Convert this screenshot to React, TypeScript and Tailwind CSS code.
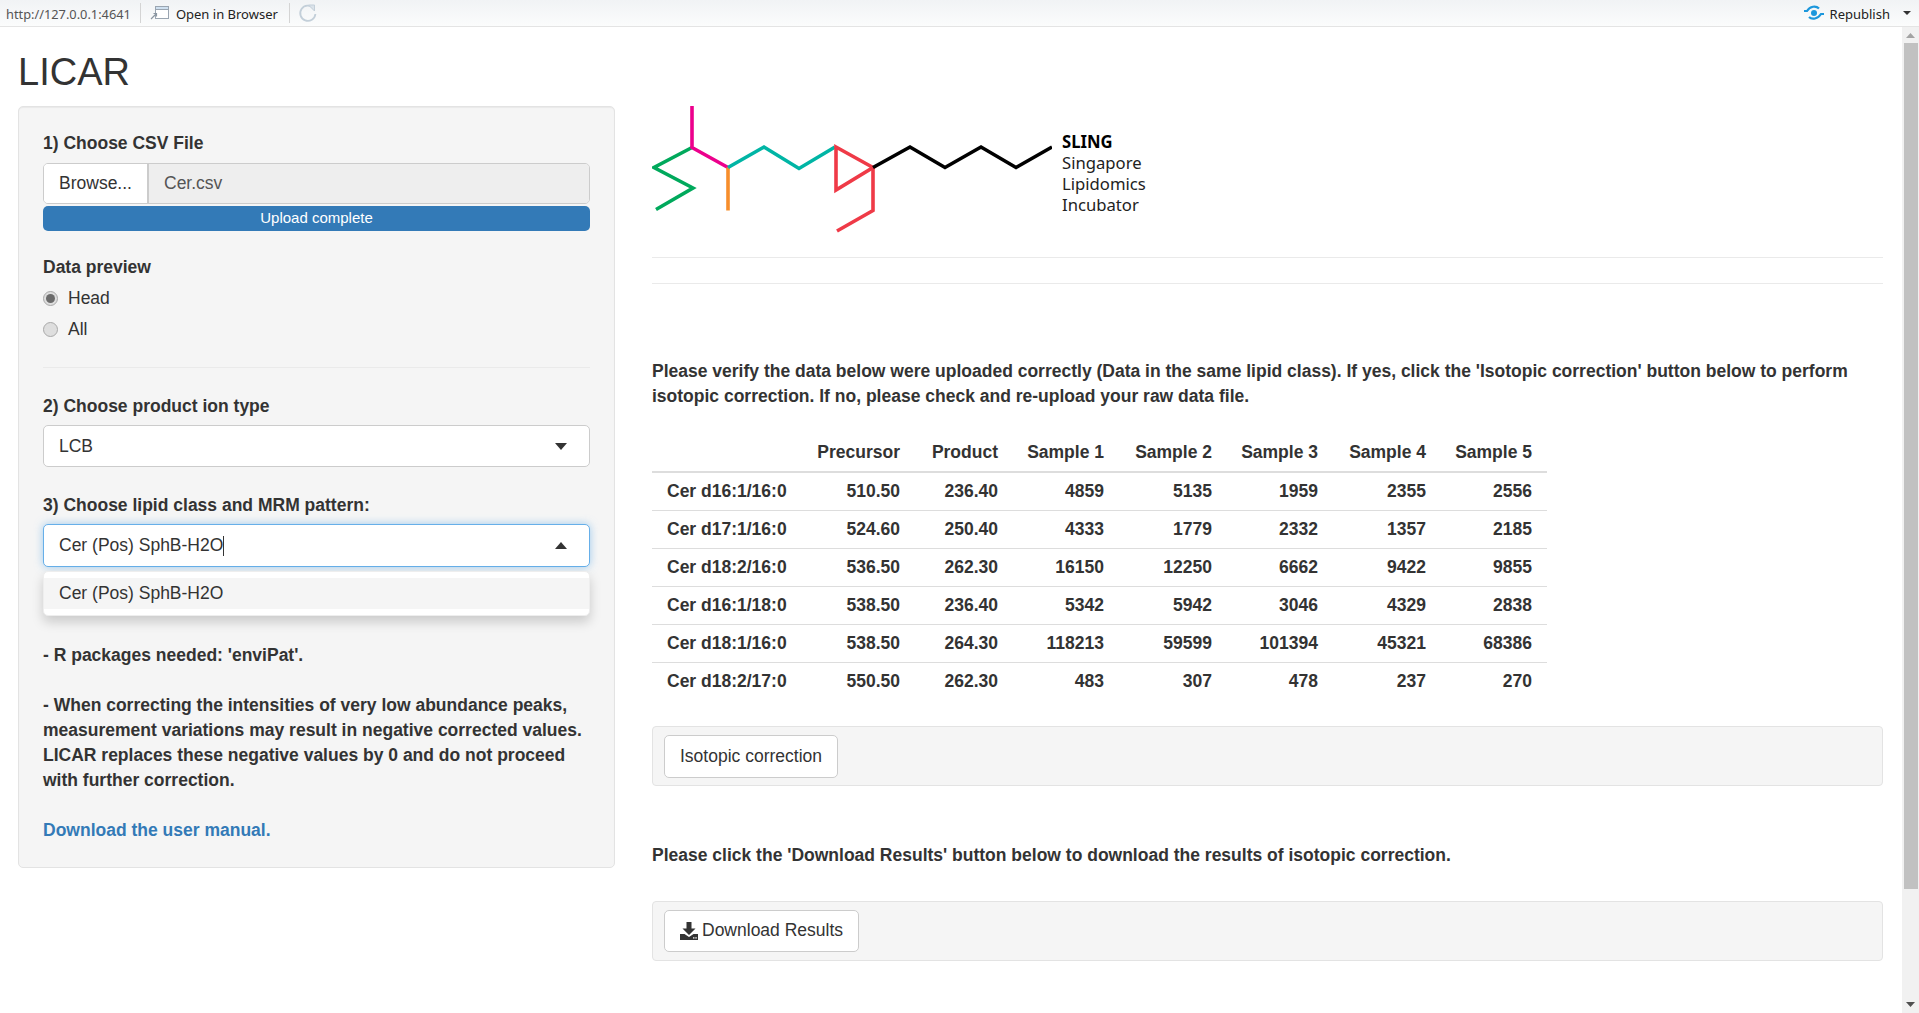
import React from "react";

const COLUMNS = [
  { name: "Precursor", width: "w-[113px]" },
  { name: "Product", width: "w-[98px]" },
  { name: "Sample 1", width: "w-[106px]" },
  { name: "Sample 2", width: "w-[108px]" },
  { name: "Sample 3", width: "w-[106px]" },
  { name: "Sample 4", width: "w-[108px]" },
  { name: "Sample 5", width: "w-[106px]" },
];

const ROWS: string[][] = [
  ["Cer d16:1/16:0", "510.50", "236.40", "4859", "5135", "1959", "2355", "2556"],
  ["Cer d17:1/16:0", "524.60", "250.40", "4333", "1779", "2332", "1357", "2185"],
  ["Cer d18:2/16:0", "536.50", "262.30", "16150", "12250", "6662", "9422", "9855"],
  ["Cer d16:1/18:0", "538.50", "236.40", "5342", "5942", "3046", "4329", "2838"],
  ["Cer d18:1/16:0", "538.50", "264.30", "118213", "59599", "101394", "45321", "68386"],
  ["Cer d18:2/17:0", "550.50", "262.30", "483", "307", "478", "237", "270"],
];

function Caret({ up }: { up?: boolean }) {
  return (
    <svg width="12" height="7" viewBox="0 0 12 7" className="shrink-0">
      <path d={up ? "M0 7 L6 0 L12 7 Z" : "M0 0 L12 0 L6 7 Z"} fill="#333" />
    </svg>
  );
}

function Radio({ label, checked }: { label: string; checked?: boolean }) {
  return (
    <div className="flex items-center h-[31px] text-[#333]">
      <span className="w-[15px] h-[15px] rounded-full border border-[#a9a9a9] bg-[#dedede] flex items-center justify-center mr-[10px]">
        {checked && <span className="w-[9px] h-[9px] rounded-full bg-[#6b6b6b]" />}
      </span>
      {label}
    </div>
  );
}

function TopBar() {
  return (
    <div className="h-[27px] shrink-0 flex items-center bg-gradient-to-b from-[#f1f3f5] to-[#fbfcfc] border-b border-[#e4e4e4] text-[13px] font-['Noto_Sans',sans-serif]">
      <span className="ml-[6px] pt-[3px] text-[#555] text-[12.8px]">http://127.0.0.1:4641</span>
      <span className="ml-[9px] w-px h-[20px] bg-[#d4d4d4]" />
      <svg width="20" height="16" viewBox="0 0 20 16" className="ml-[9px]" fill="none">
        <rect x="5.5" y="1.5" width="13" height="12" fill="#fff" stroke="#9aa5b1" />
        <rect x="5.5" y="1.5" width="13" height="3" fill="#cfe0f0" stroke="#9aa5b1" />
        <path d="M1 14 L6 9 M3.5 8.5 H6.5 V11.5" stroke="#8b96a1" strokeWidth="1.2" />
      </svg>
      <span className="ml-[6px] pt-[3px] text-[#222]">Open in Browser</span>
      <span className="ml-[11px] w-px h-[20px] bg-[#d4d4d4]" />
      <svg width="20" height="20" viewBox="0 0 20 20" className="ml-[8px]" fill="none">
        <path d="M15.5 5.2 A7.6 7.6 0 1 0 17.4 11" stroke="#c3cfd9" strokeWidth="1.8" />
        <path d="M10.5 2 L16.5 2 L16.5 8 Z" fill="#dbe3ea" stroke="#c3cfd9" />
      </svg>
      <div className="ml-auto flex items-center">
        <svg width="22" height="16" viewBox="0 0 22 16" fill="none">
          <circle cx="11" cy="8" r="3" fill="#1c97dc" />
          <path d="M1 6 H4 C7 1 13 0.5 16 3.5" stroke="#1c97dc" strokeWidth="2.2" />
          <path d="M21 9 H18 C15 14 9 15 6 12" stroke="#1c97dc" strokeWidth="2.2" />
        </svg>
        <span className="ml-[5px] pt-[3px] text-[#222]">Republish</span>
        <svg width="8" height="4" viewBox="0 0 8 4" className="ml-[13px] mr-[8px]">
          <path d="M0 0 H8 L4 4 Z" fill="#333" />
        </svg>
      </div>
    </div>
  );
}

function Scrollbar() {
  return (
    <div className="w-[17px] shrink-0 bg-[#f1f1f1] flex flex-col items-center">
      <svg width="9" height="5" viewBox="0 0 9 5" className="mt-[6px]">
        <path d="M0 5 L4.5 0 L9 5 Z" fill="#a3a3a3" />
      </svg>
      <div className="w-[14px] h-[846px] mt-[5px] bg-[#c1c1c1]" />
      <svg width="9" height="5" viewBox="0 0 9 5" className="mt-auto mb-[6px]">
        <path d="M0 0 H9 L4.5 5 Z" fill="#505050" />
      </svg>
    </div>
  );
}

function Logo() {
  return (
    <div className="flex items-start h-[132px]">
      <svg width="400" height="132" viewBox="0 0 400 132" fill="none" strokeWidth="3.6" className="shrink-0">
        <path d="M40 41.5 L2 61.5 L41 82 L4 103.5" stroke="#00a95c" />
        <path d="M40 0 V41.5 L76 61.5" stroke="#ec008c" />
        <path d="M76 61.5 V104.5" stroke="#f78e2b" />
        <path d="M76 61.5 L112 41 L147 62.5 L183 41" stroke="#00b5a5" />
        <path d="M184 41 L221 61.5 L184 84 Z" stroke="#ef3a47" />
        <path d="M221 61.5 V104.5 L185 125" stroke="#ef3a47" />
        <path d="M221 61.5 L258 41 L293 61.5 L329 41 L364 61.5 L400 41" stroke="#000" />
      </svg>
      <div className="ml-[10px] mt-[26px] text-[17px] leading-[21px] text-[#222] font-['Noto_Sans',sans-serif] scale-x-[0.98] origin-left">
        <div className="font-bold text-black leading-[20px]">SLING</div>
        <div>Singapore</div>
        <div>Lipidomics</div>
        <div>Incubator</div>
      </div>
    </div>
  );
}

function Sidebar() {
  return (
    <div className="w-[597px] shrink-0 h-[762px] border border-[#e3e3e3] rounded-[5px] bg-[#f5f5f5] px-[24px] pt-[24px] shadow-[inset_0_1px_1px_rgba(0,0,0,0.05)] text-[#333]">
      <div className="font-bold h-[24px] leading-[24px] mb-[8px]">1) Choose CSV File</div>
      <div className="flex h-[41px] border border-[#ccc] rounded-[5px] overflow-hidden">
        <div className="w-[105px] bg-white border-r-2 border-[#ccc] flex items-center justify-center">Browse...</div>
        <div className="flex-1 bg-[#eee] text-[#555] flex items-center px-[15px]">Cer.csv</div>
      </div>
      <div className="h-[25px] mt-[2px] bg-[#337ab7] rounded-[5px] text-white text-[15px] flex items-center justify-center">Upload complete</div>

      <div className="font-bold h-[24px] leading-[24px] mt-[24px] mb-[4px]">Data preview</div>
      <Radio label="Head" checked />
      <Radio label="All" />

      <div className="h-px bg-[#eaeaea] mt-[22px]" />

      <div className="font-bold h-[24px] leading-[24px] mt-[26px] mb-[7px]">2) Choose product ion type</div>
      <div className="h-[42px] bg-white border border-[#ccc] rounded-[5px] flex items-center justify-between pl-[15px] pr-[22px]">
        LCB
        <Caret />
      </div>

      <div className="font-bold h-[24px] leading-[24px] mt-[26px] mb-[7px]">3) Choose lipid class and MRM pattern:</div>
      <div className="relative">
        <div className="h-[43px] bg-white border border-[#66afe9] rounded-[5px] shadow-[0_0_8px_rgba(102,175,233,0.6)] flex items-center justify-between pl-[15px] pr-[22px]">
          <span className="flex items-center">
            Cer (Pos) SphB-H2O
            <span className="w-px h-[20px] bg-[#333]" />
          </span>
          <Caret up />
        </div>
        <div className="absolute left-0 right-0 top-[47px] bg-white rounded-[5px] border border-[#eee] py-[6px] shadow-[0_6px_12px_rgba(0,0,0,0.175)]">
          <div className="h-[31px] leading-[31px] bg-[#f5f5f5] px-[15px]">Cer (Pos) SphB-H2O</div>
        </div>
      </div>

      <div className="font-bold leading-[25px] mt-[76px]">
        <p>- R packages needed: 'enviPat'.</p>
        <p className="mt-[25px]">
          - When correcting the intensities of very low abundance peaks, measurement variations may result in negative corrected values. LICAR replaces these negative values by 0 and do not proceed with further correction.
        </p>
        <p className="mt-[25px] text-[#337ab7]">Download the user manual.</p>
      </div>
    </div>
  );
}

function DataTable() {
  return (
    <table className="w-[895px] table-fixed border-collapse text-[#333] font-bold mt-[24px]">
      <thead>
        <tr className="h-[39px] border-b-[2px] border-[#ddd]">
          <th className="w-[150px] px-[15px]" />
          {COLUMNS.map((col) => (
            <th key={col.name} className={`${col.width} pl-0 pr-[15px] text-right font-bold whitespace-nowrap`}>{col.name}</th>
          ))}
        </tr>
      </thead>
      <tbody>
        {ROWS.map((row, i) => (
          <tr key={row[0]} className={i === 0 ? "h-[38px]" : "h-[38px] border-t border-[#ddd]"}>
            {row.map((cell, j) => (
              <td key={j} className={j === 0 ? "pl-[15px] text-left whitespace-nowrap" : "pr-[15px] text-right"}>{cell}</td>
            ))}
          </tr>
        ))}
      </tbody>
    </table>
  );
}

function MainPanel() {
  return (
    <div className="flex-1 min-w-0 ml-[37px] mr-[19px] text-[#333]">
      <Logo />
      <div className="h-px bg-[#eaeaea] mt-[19px]" />
      <div className="h-px bg-[#eaeaea] mt-[25px]" />
      <p className="font-bold leading-[25px] mt-[75px]">
        Please verify the data below were uploaded correctly (Data in the same lipid class). If yes, click the 'Isotopic correction' button below to perform isotopic correction. If no, please check and re-upload your raw data file.
      </p>
      <DataTable />
      <div className="mt-[26px] h-[60px] bg-[#f5f5f5] border border-[#e3e3e3] rounded-[4px] flex items-center px-[11px]">
        <div className="h-[43px] px-[15px] bg-white border border-[#ccc] rounded-[5px] flex items-center">Isotopic correction</div>
      </div>
      <p className="font-bold leading-[25px] mt-[57px]">
        Please click the 'Download Results' button below to download the results of isotopic correction.
      </p>
      <div className="mt-[33px] h-[60px] bg-[#f5f5f5] border border-[#e3e3e3] rounded-[4px] flex items-center px-[11px]">
        <div className="h-[42px] px-[15px] pb-[1px] bg-white border border-[#ccc] rounded-[5px] flex items-center">
          <svg width="18" height="18" viewBox="0 0 18 18" className="mr-[4px]" fill="#333">
            <path d="M6.5 0 H11.5 V6.5 H15.5 L9 13 L2.5 6.5 H6.5 Z" />
            <path d="M0 12 H4.5 L9 15 L13.5 12 H18 V18 H0 Z" />
            <rect x="13" y="15.3" width="1.5" height="1.2" fill="#fff" />
            <rect x="15.3" y="15.3" width="1.5" height="1.2" fill="#fff" />
          </svg>
          Download Results
        </div>
      </div>
    </div>
  );
}

export default function App() {
  return (
    <div className="w-[1919px] h-[1013px] flex flex-col overflow-hidden bg-white font-['Liberation_Sans',Arial,sans-serif] text-[17.5px]">
      <TopBar />
      <div className="flex-1 min-h-0 flex">
        <div className="flex-1 min-w-0 pl-[18px]">
          <h1 className="text-[38px] leading-[44px] text-[#333] mt-[23px] mb-[12px]">LICAR</h1>
          <div className="flex items-start">
            <Sidebar />
            <MainPanel />
          </div>
        </div>
        <Scrollbar />
      </div>
    </div>
  );
}
